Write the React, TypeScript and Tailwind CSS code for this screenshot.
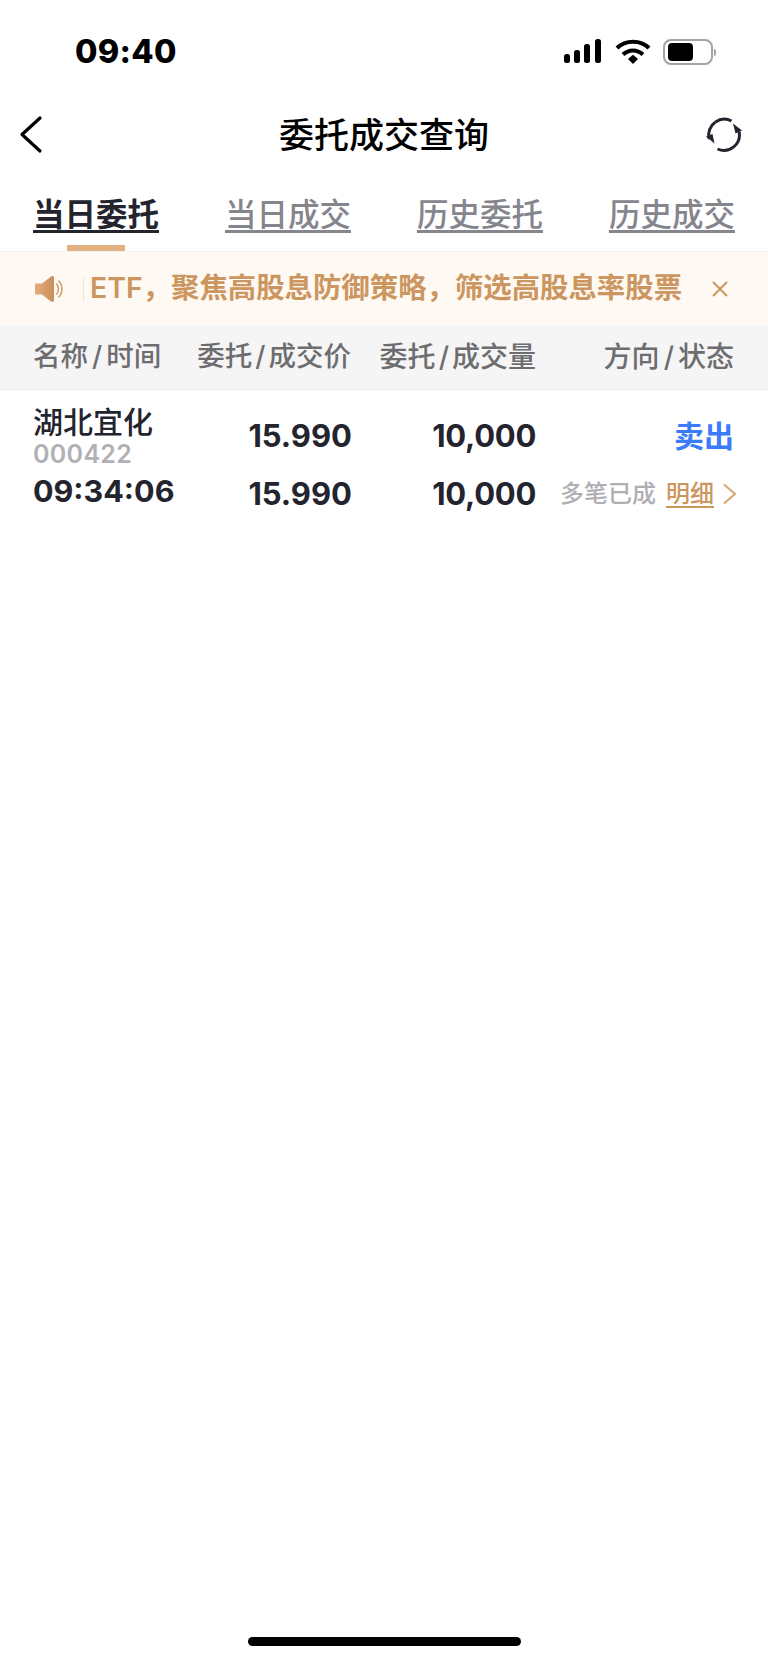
const tabs = ["当日委托", "当日成交", "历史委托", "历史成交"];

function StatusIcons() {
  return (
    <div className="flex items-center">
      {/* signal */}
      <svg width="39" height="26" viewBox="0 0 39 26" className="mr-[12px]">
        <rect x="0" y="15" width="6" height="9" rx="2.5" fill="#000" />
        <rect x="10" y="11" width="6" height="13" rx="2.5" fill="#000" />
        <rect x="20" y="5" width="6" height="19" rx="2.5" fill="#000" />
        <rect x="31" y="0" width="6" height="24" rx="2.5" fill="#000" />
      </svg>
      {/* wifi */}
      <svg width="36" height="26" viewBox="0 0 36 26" className="mr-[12px]">
        <path d="M2 9C10.5 .5 25.5 .5 34 9" fill="none" stroke="#000" strokeWidth="4" />
        <path d="M8 15.5C14 10 22 10 28 15.5" fill="none" stroke="#000" strokeWidth="4" />
        <path d="M13 20L18 15.8L23 20L18 25Z" fill="#000" />
      </svg>
      {/* battery */}
      <div className="flex items-center">
        <div className="flex h-[26px] w-[50px] items-center rounded-[8px] border-[2px] border-[#a3a3a3] pl-[2.5px]">
          <div className="h-[18px] w-[25px] rounded-[4px] bg-black" />
        </div>
        <div className="ml-[1px] h-[7px] w-[2px] rounded-r-full bg-[#a3a3a3]" />
      </div>
    </div>
  );
}

function BackIcon() {
  return (
    <svg width="38" height="40" viewBox="0 0 38 40" fill="none">
      <path d="M29 3L11 19.5L29 36" stroke="#000" strokeWidth="3.2" strokeLinecap="round" strokeLinejoin="round" />
    </svg>
  );
}

function RefreshIcon() {
  return (
    <svg width="38" height="36" viewBox="0 0 38 36" fill="none">
      <path d="M10.5 5A15.5 15.5 0 0 1 26.5 4" stroke="#24242e" strokeWidth="3" />
      <path d="M34 14.5A15.5 15.5 0 0 1 12.5 32" stroke="#24242e" strokeWidth="3" />
      <path d="M4.2 22A15.5 15.5 0 0 1 10.5 5" stroke="#24242e" strokeWidth="3" />
      <path d="M28 6.5L37 13.5L30.5 16.5Z" fill="#24242e" />
      <path d="M1 19.5L7.5 17L9.5 26.5Z" fill="#24242e" />
    </svg>
  );
}

function SpeakerIcon() {
  return (
    <svg width="30" height="28" viewBox="0 0 30 28" fill="none">
      <defs>
        <linearGradient id="speaker" x1="0" y1="0" x2="1" y2="0">
          <stop offset="0" stopColor="#e3ad7f" />
          <stop offset="1" stopColor="#c98f5c" />
        </linearGradient>
      </defs>
      <path d="M0 8.5H7L16 1.5C17.5.5 19 1 19 3V25C19 27 17.5 27.5 16 26.5L7 19.5H0Z" fill="url(#speaker)" />
      <path d="M21.5 8.5C24 11.5 24 16.5 21.5 19.5" stroke="#d49c6b" strokeWidth="1.5" />
      <path d="M23.5 5.5C28 10 28 18 23.5 22.5" stroke="#d49c6b" strokeWidth="1.5" />
    </svg>
  );
}

export default function App() {
  return (
    <div className="flex h-[1663px] w-[768px] flex-col overflow-hidden bg-white font-['Inter','Noto_Sans_CJK_SC',sans-serif]">
      {/* Status bar */}
      <div className="flex h-[102px] items-center justify-between pl-[75px] pr-[52px] pt-[2px]">
        <span className="text-[32.5px] font-extrabold leading-none tracking-[0.3px] text-black">09:40</span>
        <StatusIcons />
      </div>

      {/* Nav bar */}
      <div className="flex h-[66px] items-center justify-between pl-[11px] pr-[25px]">
        <div className="w-[52px]">
          <BackIcon />
        </div>
        <h1 className="text-[35px] font-medium leading-none text-black">委托成交查询</h1>
        <RefreshIcon />
      </div>

      {/* Tabs */}
      <div className="flex h-[83px] justify-between px-[33px] pt-[26px]">
        {tabs.map((tab, i) => (
          <div key={tab} className="relative h-[42px]">
            <span
              className={
                i === 0
                  ? "text-[31.5px] font-bold leading-[42px] text-[#24242e] underline underline-offset-[4px]"
                  : "text-[31.5px] font-medium leading-[42px] text-[#85858d] underline underline-offset-[4px]"
              }
            >
              {tab}
            </span>
            {i === 0 && <div className="absolute bottom-[-15px] left-[34px] h-[6px] w-[58px] bg-[#e3b080]" />}
          </div>
        ))}
      </div>

      {/* Notice */}
      <div className="flex h-[74px] items-center border-t border-[#f3f1ee] bg-[#fff9f3] pl-[35px] pr-[40px]">
        <SpeakerIcon />
        <div className="ml-[18px] mr-[6px] h-[24px] w-px bg-[#f5e3d2]" />
        <span className="flex-1 whitespace-nowrap text-[28.4px] font-semibold leading-none text-[#cc9660]">
          ETF，聚焦高股息防御策略，筛选高股息率股票
        </span>
        <svg width="16" height="16" viewBox="0 0 16 16" fill="none">
          <path d="M1 1L15 15M15 1L1 15" stroke="#cc9660" strokeWidth="2" />
        </svg>
      </div>

      {/* Table header */}
      <div className="grid h-[65px] grid-cols-[151px_167px_185px_198px] items-center border-b border-[#ececec] bg-[#f5f5f5] pl-[33px] pr-[34px] text-[27.5px] font-medium leading-none text-[#6d6d6f]">
        <span>
          名称<span className="mx-[4px]">/</span>时间
        </span>
        <span className="text-right">
          委托<span className="mx-[3px]">/</span>成交价
        </span>
        <span className="text-right text-[28px]">
          委托<span className="mx-[3px]">/</span>成交量
        </span>
        <span className="text-right text-[28px]">
          方向<span className="mx-[4px]">/</span>状态
        </span>
      </div>

      {/* Order row */}
      <div className="grid grid-cols-[151px_168px_184px_198px] pl-[33px] pr-[34px] pt-[14px] text-[#24242e]">
        <div className="flex flex-col">
          <span className="text-[30px] font-medium leading-[36px]">湖北宜化</span>
          <span className="mt-[1px] text-[25px] font-semibold leading-[27px] tracking-[0.3px] text-[#b0b1b6]">000422</span>
          <span className="mt-[5px] text-[30.5px] font-bold leading-[36px]">09:34:06</span>
        </div>
        <div className="flex flex-col items-end pt-[13px] text-[31px] font-bold leading-[38px]">
          <span>15.990</span>
          <span className="mt-[20px]">15.990</span>
        </div>
        <div className="flex flex-col items-end pt-[13px] text-[31px] font-bold leading-[38px] tracking-[-0.3px]">
          <span>10,000</span>
          <span className="mt-[20px]">10,000</span>
        </div>
        <div className="flex flex-col items-end pt-[13px]">
          <span className="text-[30px] font-bold leading-[38px] text-[#3a7bfa]">卖出</span>
          <div className="mt-[20px] flex h-[38px] items-center">
            <span className="text-[24px] font-medium leading-none text-[#aeaeb3]">多笔已成</span>
            <span className="ml-[10px] text-[24px] font-medium leading-none text-[#cc9660] underline underline-offset-[4px]">明细</span>
            <svg width="15" height="22" viewBox="0 0 15 22" fill="none" className="-mr-[3px] ml-[8px]">
              <path d="M2 1.5L13 11L2 20.5" stroke="#d8a66f" strokeWidth="2" />
            </svg>
          </div>
        </div>
      </div>

      <div className="flex-1" />

      {/* Home indicator */}
      <div className="mx-auto mb-[17px] h-[9px] w-[273px] rounded-full bg-black" />
    </div>
  );
}
